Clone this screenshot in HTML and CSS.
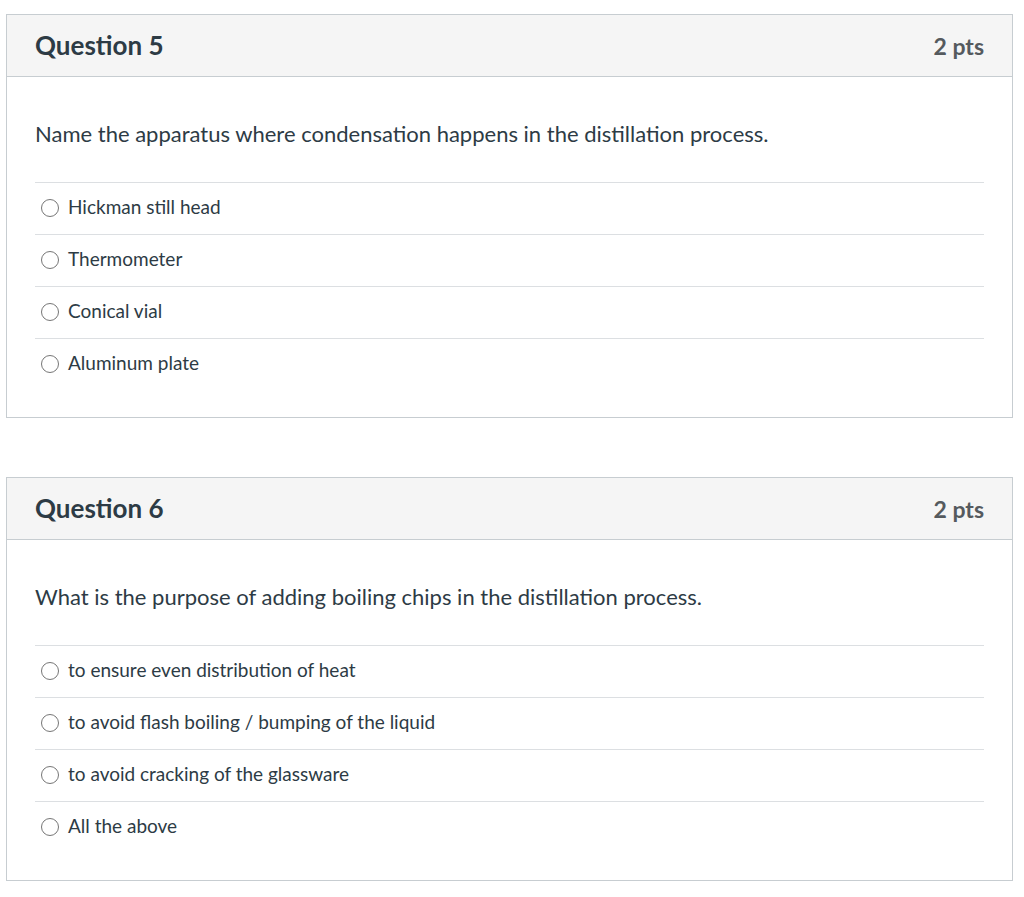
FILE: index.html
```html
<!DOCTYPE html>
<html>
<head>
<meta charset="utf-8">
<link rel="stylesheet" href="styles.css">
</head>
<body>
<div class="quiz">
  <div class="card">
    <div class="header">
      <span class="title">Question 5</span>
      <span class="pts">2 pts</span>
    </div>
    <div class="body">
      <div class="qtext">Name the apparatus where condensation happens in the distillation process.</div>
      <div class="answers">
        <label class="answer"><span class="radio"></span><span>Hickman still head</span></label>
        <label class="answer"><span class="radio"></span><span>Thermometer</span></label>
        <label class="answer"><span class="radio"></span><span>Conical vial</span></label>
        <label class="answer"><span class="radio"></span><span>Aluminum plate</span></label>
      </div>
    </div>
  </div>
  <div class="card">
    <div class="header">
      <span class="title">Question 6</span>
      <span class="pts">2 pts</span>
    </div>
    <div class="body">
      <div class="qtext">What is the purpose of adding boiling chips in the distillation process.</div>
      <div class="answers">
        <label class="answer"><span class="radio"></span><span>to ensure even distribution of heat</span></label>
        <label class="answer"><span class="radio"></span><span>to avoid flash boiling / bumping of the liquid</span></label>
        <label class="answer"><span class="radio"></span><span>to avoid cracking of the glassware</span></label>
        <label class="answer"><span class="radio"></span><span>All the above</span></label>
      </div>
    </div>
  </div>
</div>
</body>
</html>
```
FILE: styles.css
```css
html, body {
  margin: 0;
  padding: 0;
  background: #ffffff;
}
body {
  font-family: Lato, "Open Sans", sans-serif;
  color: #2d3b45;
}
.quiz {
  padding: 14px 11px 0 6px;
  display: flex;
  flex-direction: column;
  gap: 59px;
}
.card {
  border: 1px solid #c7cdd1;
  background: #fff;
}
.header {
  background: #f5f5f5;
  border-bottom: 1px solid #c7cdd1;
  height: 61px;
  display: flex;
  align-items: center;
  justify-content: space-between;
  padding: 0 28px;
}
.title {
  font-size: 26px;
  font-weight: 700;
  color: #2d3b45;
  line-height: 30px;
  padding-bottom: 2px;
}
.pts {
  font-size: 23px;
  font-weight: 700;
  color: #555a5e;
  line-height: 30px;
}
.body {
  padding: 42px 28px 27px;
}
.qtext {
  font-size: 22px;
  line-height: 30px;
  padding-bottom: 33px;
}
.answers {
  display: flex;
  flex-direction: column;
}
.answer {
  display: flex;
  align-items: center;
  gap: 9px;
  height: 48px;
  padding: 0 0 3px 6px;
  border-top: 1px solid #dcdfe2;
  font-size: 19px;
  line-height: 24px;
}
.radio {
  width: 18px;
  height: 18px;
  border: 1px solid #767676;
  border-radius: 50%;
  box-sizing: border-box;
  background: #fff;
  flex: none;
  margin-top: 1px;
}
```
